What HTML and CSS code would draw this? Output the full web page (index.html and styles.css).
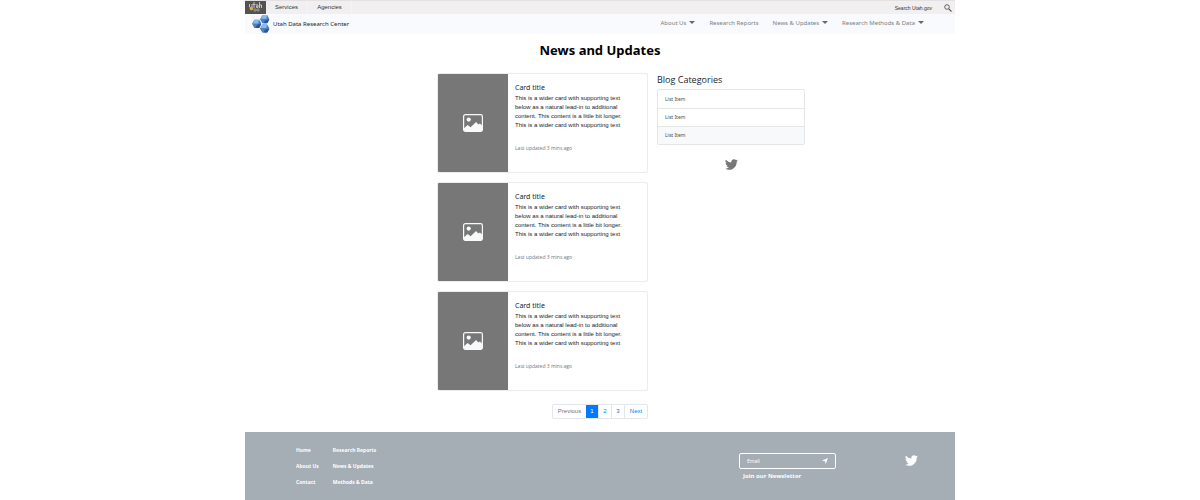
FILE: index.html
```html
<!DOCTYPE html>
<html lang="en">
<head>
<meta charset="utf-8">
<meta name="viewport" content="width=device-width, initial-scale=1">
<title>Utah Data Research Center - News and Updates</title>
<link rel="stylesheet" href="styles.css">
</head>
<body>
<svg class="sprite" aria-hidden="true">
  <symbol id="twitter" viewBox="0 0 24 24"><path fill="currentColor" d="M23.95 4.57a10 10 0 0 1-2.82.77 4.96 4.96 0 0 0 2.16-2.72 9.9 9.9 0 0 1-3.12 1.18 4.92 4.92 0 0 0-8.38 4.48A13.93 13.93 0 0 1 1.64 3.16a4.92 4.92 0 0 0 1.52 6.57 4.9 4.9 0 0 1-2.23-.61v.06a4.92 4.92 0 0 0 3.95 4.83 5 5 0 0 1-2.21.08 4.94 4.94 0 0 0 4.6 3.42A9.87 9.87 0 0 1 0 19.54a13.99 13.99 0 0 0 7.55 2.21c9.05 0 14-7.5 14-13.98 0-.21 0-.42-.02-.63a9.94 9.94 0 0 0 2.42-2.57z"/></symbol>
  <symbol id="picture" viewBox="0 0 20 18"><rect x=".6" y=".6" width="18.8" height="16.8" rx="1.8" fill="none" stroke="#f8f9fa" stroke-width="1.2"/><circle cx="5.7" cy="5.6" r="2.1" fill="#f8f9fa"/><path fill="#f8f9fa" d="M1 14.2l3.6-3.1 3 2.1 5.5-5.3 2.2 2.7 1.6-1 2.6 2.2v4.2a1.4 1.4 0 0 1-1.4 1.4H2.4A1.4 1.4 0 0 1 1 15.8z"/></symbol>
  <symbol id="cube" viewBox="0 0 10 9"><path fill="#4c80c4" d="M2.5 0h5L10 4.5 7.5 9h-5L0 4.5z"/><path fill="#8fb8ea" d="M2.5 0h5L6.500 4H1z"/><path fill="#2a5595" d="M5.500 5.500L10 4.500 7.500 9h-4z"/></symbol>
</svg>
<div class="page">
  <div class="topbar">
    <a class="state-logo" href="#" aria-label="Utah.gov">
      <svg viewBox="0 0 14 11"><path fill="none" stroke="#c9c4bd" stroke-width="1" d="M1.500 3v3q1 1.500 2.500 0V3M6 1v6M4.800 3.500h2.700M8 4q2-1 2 .5v2H8.500V5H10M11.500 1v6M11.500 4H13.500V7"/><path fill="none" stroke="#aaa49c" stroke-width=".8" d="M6 8h2v2H6zM9 8h2v2H9z"/><circle cx="3.400" cy="7.600" r="1.800" fill="#e9a63a"/></svg>
    </a>
    <a class="topbar-link" href="#">Services</a>
    <a class="topbar-link agencies" href="#">Agencies</a>
    <button class="search" type="button">Search Utah.gov
      <svg viewBox="0 0 8 8"><circle cx="3" cy="3" r="2.300" fill="none" stroke="#555" stroke-width=".9"/><path stroke="#555" stroke-width="1.100" d="M4.800 4.800L7.500 7.500"/></svg>
    </button>
  </div>
  <header class="navbar">
    <a class="brand" href="#">
      <svg viewBox="0 0 18 18"><use href="#cube" x="8" y="0" width="9.500" height="8.500"/><use href="#cube" x="0" y="4.600" width="9.500" height="8.500"/><use href="#cube" x="8" y="9.300" width="9.500" height="8.500"/></svg>
      Utah Data Research Center
    </a>
    <nav class="menu" aria-label="Main">
      <a class="caret" href="#">About Us</a>
      <a href="#">Research Reports</a>
      <a class="caret" href="#">News &amp; Updates</a>
      <a class="caret" href="#">Research Methods &amp; Data</a>
    </nav>
  </header>
  <main>
    <h1>News and Updates</h1>
    <div class="columns">
      <div class="posts">
        <article class="card">
          <div class="thumb"><svg><use href="#picture"/></svg></div>
          <div class="card-body">
            <h2>Card title</h2>
            <p>This is a wider card with supporting text below as a natural lead-in to additional content. This content is a little bit longer. This is a wider card with supporting text</p>
            <small>Last updated 3 mins ago</small>
          </div>
        </article>
        <article class="card">
          <div class="thumb"><svg><use href="#picture"/></svg></div>
          <div class="card-body">
            <h2>Card title</h2>
            <p>This is a wider card with supporting text below as a natural lead-in to additional content. This content is a little bit longer. This is a wider card with supporting text</p>
            <small>Last updated 3 mins ago</small>
          </div>
        </article>
        <article class="card">
          <div class="thumb"><svg><use href="#picture"/></svg></div>
          <div class="card-body">
            <h2>Card title</h2>
            <p>This is a wider card with supporting text below as a natural lead-in to additional content. This content is a little bit longer. This is a wider card with supporting text</p>
            <small>Last updated 3 mins ago</small>
          </div>
        </article>
        <nav class="pagination" aria-label="Pages">
          <a class="previous" href="#">Previous</a>
          <a class="current" href="#" aria-current="page">1</a>
          <a href="#">2</a>
          <a href="#">3</a>
          <a class="next" href="#">Next</a>
        </nav>
      </div>
      <aside class="sidebar">
        <h2>Blog Categories</h2>
        <ul class="categories">
          <li><a href="#">List Item</a></li>
          <li><a href="#">List Item</a></li>
          <li class="selected"><a href="#">List Item</a></li>
        </ul>
        <a class="twitter" href="#" aria-label="Twitter"><svg><use href="#twitter"/></svg></a>
      </aside>
    </div>
  </main>
  <footer class="footer">
    <nav class="footer-links" aria-label="Footer">
      <a href="#">Home</a><a href="#">Research Reports</a>
      <a href="#">About Us</a><a href="#">News &amp; Updates</a>
      <a href="#">Contact</a><a href="#">Methods &amp; Data</a>
    </nav>
    <form class="newsletter">
      <div class="email-box">
        <input id="email" type="email" placeholder="Email">
        <button type="submit" aria-label="Send"><svg viewBox="0 0 6 6"><path fill="#fff" d="M6 0L3.700 6 3 3.300 0 2.500z"/></svg></button>
      </div>
      <label for="email">Join our Newsletter</label>
    </form>
    <a class="twitter" href="#" aria-label="Twitter"><svg><use href="#twitter"/></svg></a>
  </footer>
</div>
</body>
</html>
```

FILE: styles.css
```css
* { box-sizing: border-box; }
body {
  margin: 0;
  background: #fff;
  color: #212529;
  font: 6px/9px "Noto Sans", sans-serif;
}
a { color: inherit; text-decoration: none; }
h1, h2, p, ul { margin: 0; padding: 0; }
svg { display: block; }
button { padding: 0; border: 0; background: none; color: inherit; font: inherit; }
.sprite { position: absolute; width: 0; height: 0; }
.page { max-width: 710px; min-height: 100vh; margin: 0 auto; display: flex; flex-direction: column; }

.topbar {
  display: flex;
  height: 14px;
  border-top: 1px solid #e4e1e3;
  background: #f2eff0;
  color: #333;
  font-family: "Liberation Sans", Arial, sans-serif;
  line-height: 12px;
}
.state-logo { width: 21px; padding: 0 3px; background: #535353; }
.state-logo svg { width: 14px; height: 11px; }
.topbar-link { width: 42px; text-align: center; border-right: 1px solid #f6f4f5; }
.agencies { width: 44px; }
.search { display: flex; gap: 12px; align-items: center; margin-left: auto; padding-right: 3px; font-size: 5px; }
.search svg { width: 8px; height: 8px; }

.navbar { display: flex; justify-content: space-between; height: 20px; padding: 0 31px 0 7px; background: #f8fafd; }
.brand { display: flex; align-items: center; gap: 3px; }
.brand svg { width: 18px; height: 18px; }
.menu { display: flex; gap: 14px; padding-top: 5px; color: #7b7f83; }
.caret::after {
  content: "";
  display: inline-block;
  margin-left: 3px;
  vertical-align: 1px;
  border: 3px solid transparent;
  border-top-color: #666a6e;
  border-bottom: 0;
}

main { padding: 6px 150px 13px 192px; }
h1 { margin-left: -42px; color: #000; font-size: 13px; line-height: 20px; text-align: center; }
.columns { display: flex; gap: 9px; padding-top: 13px; }
.posts { flex: 211; display: flex; flex-direction: column; gap: 9px; }
.card { display: flex; min-height: 100px; border: 1px solid #ececec; border-radius: 2px; overflow: hidden; }
.thumb { display: flex; flex: 0 0 70px; align-items: center; justify-content: center; background: #777; }
.thumb svg { width: 20px; height: 18px; }
.card-body { padding: 8px 24px 8px 7px; }
.card h2 { font-size: 7px; font-weight: 400; line-height: 12px; }
.card p { font-family: "Liberation Sans", Arial, sans-serif; }
.card small { display: block; margin-top: 14px; color: #6c757d; font: 5px/9px "Open Sans", sans-serif; }

.pagination {
  display: flex;
  align-self: flex-end;
  margin-top: 4px;
  border: 1px solid #e4e7ea;
  border-radius: 2px;
  color: #007bff;
  font: 6px/13px "Liberation Sans", Arial, sans-serif;
}
.pagination a { min-width: 13px; text-align: center; border-right: 1px solid #e4e7ea; }
.pagination .previous { width: 33px; color: #6c757d; border: 0; }
.pagination .current { background: #007bff; color: #fff; }
.pagination .next { width: 22px; border: 0; }

.sidebar { flex: 148; }
.sidebar h2 { font: 9px/13px "Open Sans", sans-serif; }
.categories { margin-top: 3px; border: 1px solid #e4e6e8; border-radius: 2px; list-style: none; color: #495057; font-size: 5px; line-height: 17px; }
.categories li { padding-left: 7px; }
.categories li + li { border-top: 1px solid #e4e6e8; }
.categories li:first-child { padding-top: 1px; }
.categories .selected { background: #f8f9fb; }
.twitter { display: block; }
.twitter svg { width: 13px; height: 13px; margin: 0 auto; }
.sidebar .twitter { margin-top: 13px; color: #777; }

.footer {
  display: flex;
  flex: 1;
  padding: 10px 37px 10px 51px;
  background: #a5adb5;
  color: #fff;
}
.footer-links { display: grid; grid-template-columns: auto auto; grid-auto-rows: 16px; column-gap: 14px; align-content: start; font-size: 5px; font-weight: 700; line-height: 16px; }
.newsletter { width: 97px; margin: 11px 69px 0 auto; font-weight: 700; }
.email-box { display: flex; align-items: center; height: 16px; padding: 0 7px; border: 1px solid #fff; border-radius: 2px; }
.email-box input { flex: 1; min-width: 0; padding: 0; border: 0; outline: 0; background: none; color: #fff; font: 5px/9px "Noto Sans", sans-serif; }
.email-box input::placeholder { color: #fff; opacity: 1; }
.email-box svg { width: 6px; height: 6px; }
.newsletter label { display: block; margin: 3px 0 0 4px; }
.footer .twitter { margin-top: 12px; }
```
